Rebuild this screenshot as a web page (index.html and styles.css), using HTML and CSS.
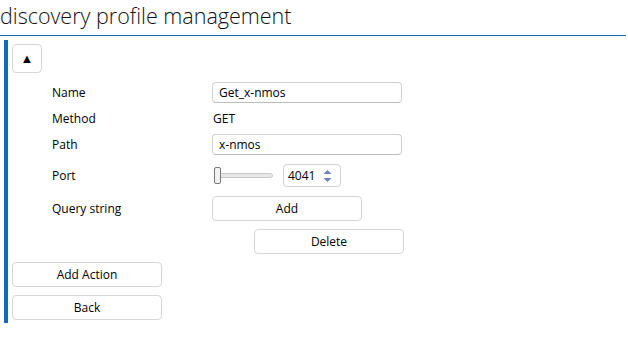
FILE: index.html
```html
<!DOCTYPE html>
<html lang="en">
<head>
    <meta charset="UTF-8">
    <title>discovery profile management</title>
    <link rel="stylesheet" href="styles.css">
</head>
<body>
<h1 class="title">discovery profile management</h1>
<div class="panel">
    <button class="toggle" type="button">&#9650;</button>
    <div class="form">
        <div class="row">
            <span class="label">Name</span>
            <input class="field" type="text" value="Get_x-nmos">
        </div>
        <div class="row">
            <span class="label">Method</span>
            <span class="value">GET</span>
        </div>
        <div class="row">
            <span class="label">Path</span>
            <input class="field" type="text" value="x-nmos">
        </div>
        <div class="row tall">
            <span class="label">Port</span>
            <div class="slider">
                <span class="track"></span>
                <span class="thumb"></span>
            </div>
            <div class="spin">
                <span class="spin-value">4041</span>
                <svg class="spin-arrows" width="9" height="14" viewBox="0 0 9 14">
                    <path d="M0.5 5 L4.5 1 L8.5 5 Z" fill="#6d7fc6"/>
                    <path d="M0.5 9 L4.5 13 L8.5 9 Z" fill="#6d7fc6"/>
                </svg>
            </div>
        </div>
        <div class="row tall">
            <span class="label">Query string</span>
            <button class="btn add" type="button">Add</button>
        </div>
        <div class="row tall">
            <span class="label"></span>
            <button class="btn delete" type="button">Delete</button>
        </div>
    </div>
    <div class="actions">
        <button class="btn" type="button">Add Action</button>
        <button class="btn" type="button">Back</button>
    </div>
</div>
</body>
</html>
```

FILE: styles.css
```css
* {
    margin: 0;
    padding: 0;
    box-sizing: border-box;
}

body {
    font-family: 'Open Sans', 'Noto Sans', sans-serif;
    font-size: 12px;
    color: #000;
    background-color: #fff;
}

.title {
    font-size: 21.5px;
    font-weight: 300;
    line-height: 32px;
    height: 36px;
    width: 626px;
    border-bottom: 1px solid #0f6cbd;
    color: #111;
    white-space: nowrap;
}

.panel {
    margin: 4px 0 0 4px;
    border-left: 4px solid #0f6cbd;
    padding: 4px 0 3px 4px;
    width: 400px;
}

.toggle {
    width: 30px;
    height: 29px;
    border: 1px solid #d6d6d6;
    border-radius: 4px;
    background: #fff;
    font-size: 13px;
    line-height: 1;
    color: #000;
    display: block;
}

.form {
    display: flex;
    flex-direction: column;
    gap: 5px;
    margin: 9px 0 0 40px;
}

.row {
    display: flex;
    align-items: center;
    height: 21px;
}

.row.tall {
    height: 25px;
    margin-top: 3px;
}

.label {
    width: 160px;
    flex-shrink: 0;
}

.value {
    padding-left: 1px;
}

.field {
    width: 190px;
    height: 21px;
    border: 1px solid #d1d1d1;
    border-bottom-color: #bdbdbd;
    border-radius: 4px;
    padding: 0 6px;
    font-family: inherit;
    font-size: 12px;
    color: #000;
    outline: none;
}

.slider {
    position: relative;
    width: 59px;
    height: 17px;
    margin-left: 2px;
}

.track {
    position: absolute;
    left: 0;
    right: 0;
    top: 6px;
    height: 5px;
    border: 1px solid #c8c8c8;
    border-radius: 3px;
    background: #e7e7e7;
}

.thumb {
    position: absolute;
    left: 0;
    top: 0;
    width: 7px;
    height: 17px;
    border: 1px solid #7a7a7a;
    border-radius: 2px;
    background: #f2f2f2;
}

.spin {
    display: flex;
    align-items: center;
    justify-content: space-between;
    width: 58px;
    height: 23px;
    margin-left: 10px;
    border: 1px solid #d1d1d1;
    border-radius: 4px;
    padding: 0 8px 0 4px;
}

.btn {
    width: 150px;
    height: 25px;
    border: 1px solid #d6d6d6;
    border-radius: 4px;
    background: #fff;
    font-family: inherit;
    font-size: 12px;
    color: #000;
}

.delete {
    margin-left: 42px;
}

.actions {
    display: flex;
    flex-direction: column;
    gap: 8px;
    margin-top: 8px;
}
```
